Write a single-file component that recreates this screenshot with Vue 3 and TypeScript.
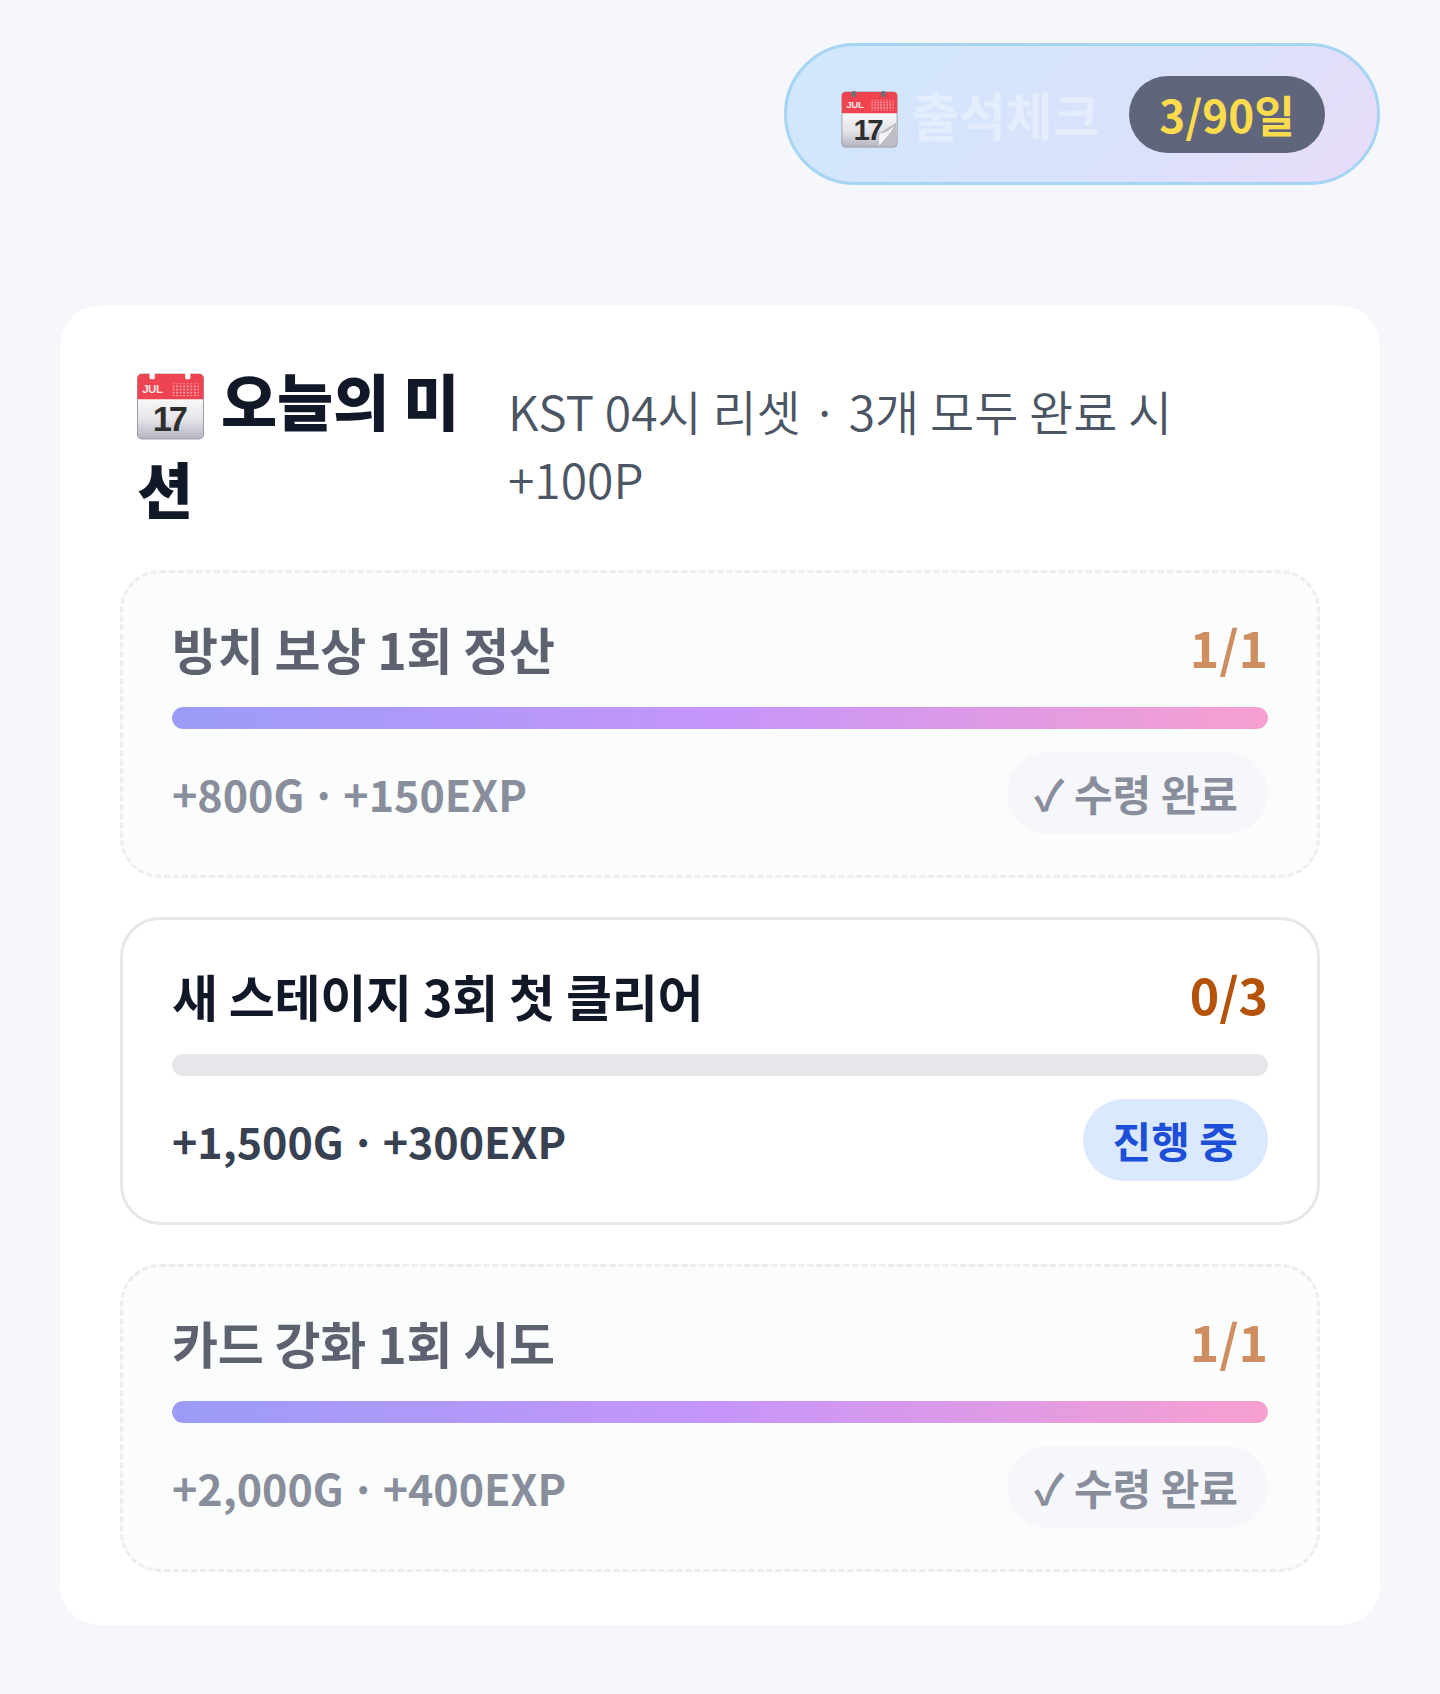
<script setup lang="ts">
interface Mission {
  title: string
  count: string
  reward: string
  done: boolean
}

const missions: Mission[] = [
  { title: '방치 보상 1회 정산', count: '1/1', reward: '+800G · +150EXP', done: true },
  { title: '새 스테이지 3회 첫 클리어', count: '0/3', reward: '+1,500G · +300EXP', done: false },
  { title: '카드 강화 1회 시도', count: '1/1', reward: '+2,000G · +400EXP', done: true },
]
</script>

<template>
  <div class="page">
    <div class="top">
      <div class="pill">
        <svg class="cal-pill" viewBox="0 0 64 64" aria-hidden="true">
          <defs>
            <linearGradient id="pb" x1="0" y1="0" x2="0" y2="1">
              <stop offset="0.35" stop-color="#fbfbfc" />
              <stop offset="0.7" stop-color="#e4e4e9" />
              <stop offset="1" stop-color="#b4b4c0" />
            </linearGradient>
            <pattern id="pd" width="3.4" height="3" patternUnits="userSpaceOnUse">
              <rect width="1.7" height="1.6" fill="#f7a9ae" />
            </pattern>
          </defs>
          <rect x="1" y="1" width="62" height="62" rx="4" fill="url(#pb)" stroke="#9b9ba8" stroke-width="1" />
          <path d="M1 25V5a4 4 0 0 1 4-4h54a4 4 0 0 1 4 4v20z" fill="#ef4350" />
          <rect x="12" y="0" width="5" height="7" rx="2" fill="#6f6f74" />
          <rect x="45" y="0" width="5" height="7" rx="2" fill="#6f6f74" />
          <text x="6" y="19" class="cal-m">JUL</text>
          <rect x="34" y="10" width="25" height="12" fill="url(#pd)" />
          <text x="14" y="55" class="cal-d">17</text>
          <path d="M62 36 48 44 40 62h19a4 4 0 0 0 3-3z" fill="#bdbdc5" />
          <path d="M62 36C58 46 50 54 43 62c-2-6-1-11 0-15 7 0 13-4 19-11z" fill="#f4f4f6" stroke="#a9a9b3" stroke-width="0.8" />
        </svg>
        <span class="pill-label">출석체크</span>
        <span class="pill-badge">3/90일</span>
      </div>
    </div>

    <section class="card">
      <header class="head">
        <h2 class="head-title">
          <svg class="cal-title" viewBox="0 0 64 64" aria-hidden="true">
            <defs>
              <linearGradient id="tb" x1="0" y1="0" x2="0" y2="1">
                <stop offset="0.35" stop-color="#fbfbfc" />
                <stop offset="0.7" stop-color="#e4e4e9" />
                <stop offset="1" stop-color="#b4b4c0" />
              </linearGradient>
              <pattern id="td" width="3.4" height="3" patternUnits="userSpaceOnUse">
                <rect width="1.7" height="1.6" fill="#f7a9ae" />
              </pattern>
            </defs>
            <rect x="0.5" y="1" width="63" height="62" rx="4" fill="url(#tb)" stroke="#a0a0ac" stroke-width="1" />
            <path d="M0.5 25V5a4 4 0 0 1 4-4h55a4 4 0 0 1 4 4v20z" fill="#ee4452" />
            <rect x="12" y="0" width="5" height="6" rx="1.5" fill="#fff" />
            <rect x="46" y="0" width="5" height="6" rx="1.5" fill="#fff" />
            <text x="5" y="19" class="cal-m">JUL</text>
            <rect x="34" y="10" width="25" height="12" fill="url(#td)" />
            <text x="15" y="55" class="cal-d">17</text>
          </svg>
          오늘의 미션
        </h2>
        <p class="head-sub">KST 04시 리셋 · 3개 모두 완료 시 +100P</p>
      </header>

      <div class="list">
        <article v-for="m in missions" :key="m.title" class="mission" :class="{ done: m.done }">
          <div class="row">
            <span class="m-title">{{ m.title }}</span>
            <span class="m-count">{{ m.count }}</span>
          </div>
          <div class="track"><div class="fill" :style="{ width: m.done ? '100%' : '0%' }"></div></div>
          <div class="row foot">
            <span class="m-reward">{{ m.reward }}</span>
            <span class="tag">{{ m.done ? '✓ 수령 완료' : '진행 중' }}</span>
          </div>
        </article>
      </div>
    </section>
  </div>
</template>

<style>
html, body { margin: 0; background: #f5f7fb; }
</style>

<style scoped>
.page {
  width: 1440px;
  height: 1694px;
  box-sizing: border-box;
  padding: 43px 60px 0;
  background: #f5f7fb;
  font-family: "Noto Sans CJK KR", "Noto Sans", sans-serif;
}
.top { display: flex; justify-content: flex-end; }
.pill {
  display: flex;
  align-items: center;
  box-sizing: border-box;
  width: 596px;
  height: 142px;
  padding: 0 52px 0 54px;
  gap: 14px;
  border: 3px solid #a6d5f4;
  border-radius: 71px;
  background: linear-gradient(135deg, #cfe8fd 0%, #d9e2fb 55%, #e9dcfa 100%);
}
.cal-pill { width: 57px; height: 57px; flex: none; margin-top: 10px; }
.pill-label {
  font-size: 51px;
  font-weight: 700;
  line-height: 1;
  color: rgba(255, 255, 255, 0.35);
}
.pill-badge {
  margin-left: auto;
  width: 196px;
  height: 77px;
  border-radius: 39px;
  background: #5f667c;
  color: #fcdc4d;
  font-size: 44px;
  font-weight: 700;
  line-height: 77px;
  text-align: center;
}
.cal-m { font-size: 11px; font-weight: 700; fill: #fde3e4; font-family: "Liberation Sans", sans-serif; letter-spacing: -0.5px; }
.cal-d { font-size: 33px; font-weight: 700; fill: #2e2e2e; font-family: "Liberation Sans", sans-serif; letter-spacing: -3px; }

.card {
  margin-top: 121px;
  box-sizing: border-box;
  width: 1320px;
  height: 1319px;
  padding: 60px 60px 54px;
  background: #fff;
  border-radius: 40px;
}
.head {
  display: flex;
  align-items: center;
  gap: 46px;
  padding: 0 17px 48px;
  height: 204px;
  box-sizing: border-box;
}
.head-title {
  margin: 0;
  flex: 0 0 325px;
  font-size: 61px;
  font-weight: 900;
  line-height: 88px;
  color: #111827;
}
.cal-title { display: inline-block; width: 67px; height: 67px; vertical-align: -14px; margin-right: 3px; }
.head-sub {
  margin: 0;
  flex: 0 0 680px;
  font-size: 48px;
  font-weight: 350;
  line-height: 68px;
  color: #4b5563;
}
.list { display: flex; flex-direction: column; gap: 39px; }
.mission {
  box-sizing: border-box;
  height: 308px;
  padding: 40px 49px 0;
  border: 3px solid #e5e7eb;
  border-radius: 40px;
  background: #fff;
}
.mission.done {
  border-color: #ebedf0;
  border-style: dashed;
  background: #fbfcfc;
}
.row { display: flex; justify-content: space-between; align-items: center; }
.m-title { font-size: 50px; font-weight: 700; color: #111827; line-height: 70px; letter-spacing: -0.25px; }
.m-count { font-size: 50px; font-weight: 700; color: #b45309; line-height: 66px; margin-bottom: 4px; }
.done .m-title { color: #5d6270; }
.done .m-count { color: #cf8d62; }
.track {
  margin-top: 24px;
  height: 22px;
  border-radius: 11px;
  background: #e5e7eb;
  overflow: hidden;
}
.fill {
  height: 100%;
  border-radius: 11px;
  background: linear-gradient(90deg, #9b9cf7 0%, #c695fa 50%, #f7a0d0 100%);
}
.foot { margin-top: 23px; }
.m-reward { font-size: 43px; font-weight: 700; color: #374151; line-height: 82px; word-spacing: -3px; }
.done .m-reward { color: #888e9b; }
.tag {
  height: 82px;
  padding: 0 30px;
  border-radius: 41px;
  background: #dbe9fe;
  color: #1d4ed8;
  font-size: 42px;
  font-weight: 700;
  line-height: 82px;
}
.done .tag {
  padding-left: 27px;
  background: #f6f7fb;
  color: #888e9b;
}
</style>
